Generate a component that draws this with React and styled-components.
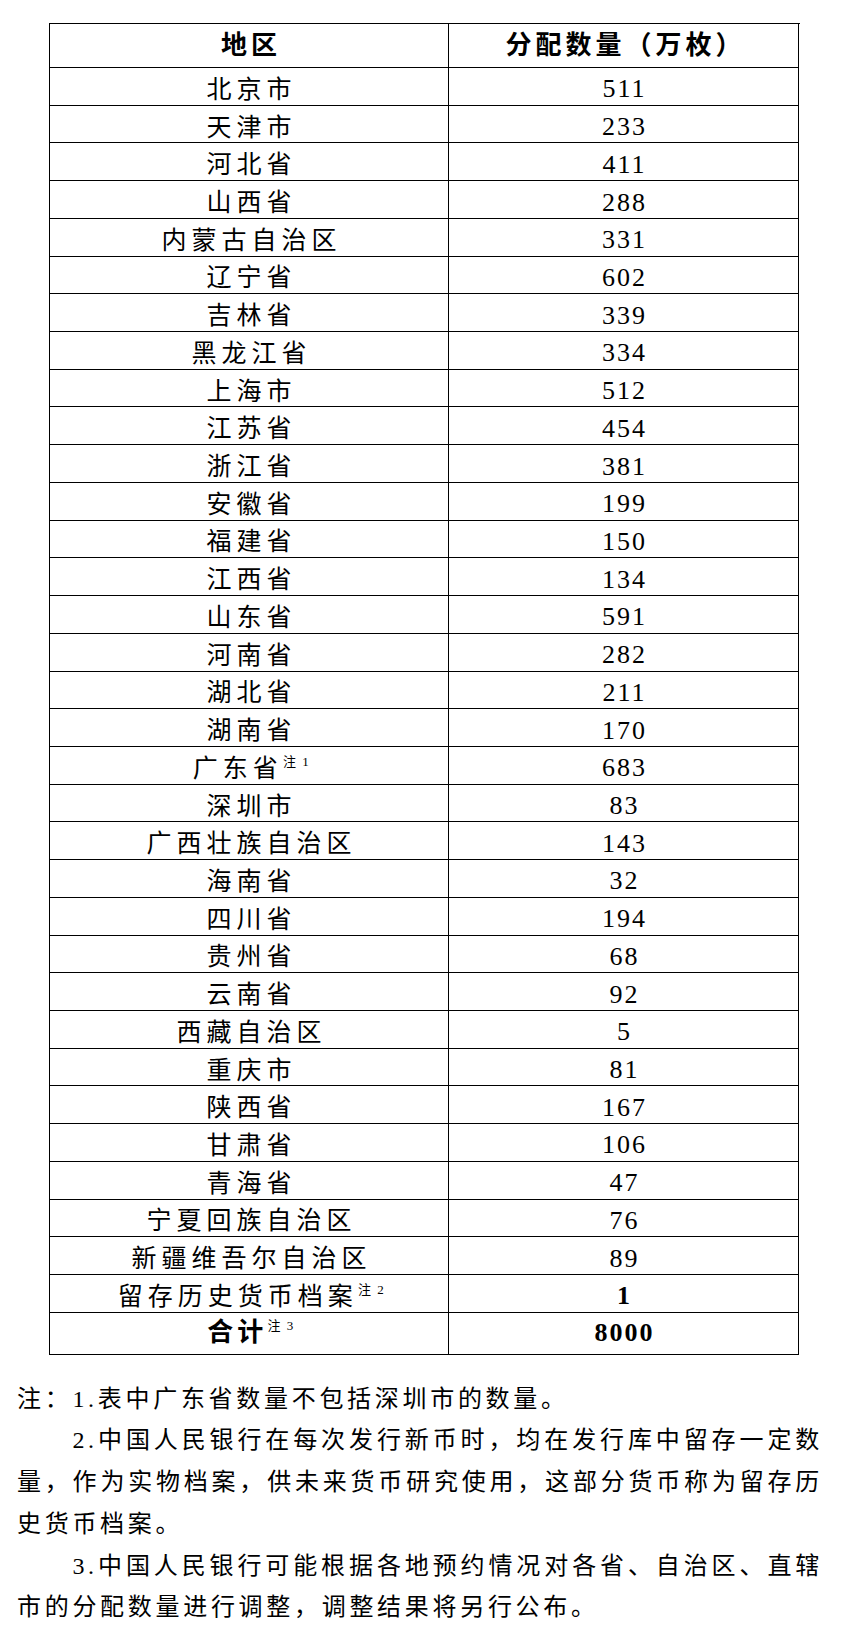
import React from 'react';
import styled, { createGlobalStyle } from 'styled-components';

const GlobalStyle = createGlobalStyle`
  html, body {
    margin: 0;
    padding: 0;
    background: #fff;
  }
  body {
    font-family: "Liberation Serif", "Noto Sans CJK SC", serif;
    color: #000;
  }
`;

const Page = styled.div`
  width: 849px;
  min-height: 1645px;
  box-sizing: border-box;
  padding-top: 23px;
`;

const Table = styled.div`
  display: grid;
  grid-template-columns: 399px 350px;
  grid-template-rows: 44px repeat(33, 37.73px) 42px;
  margin-left: 49px;
  width: 750px;
  border-top: 1px solid #000;
  border-left: 1px solid #000;
`;

const Cell = styled.div`
  box-sizing: border-box;
  border-right: 1px solid #000;
  border-bottom: 1px solid #000;
  display: flex;
  align-items: center;
  justify-content: center;
  padding-top: ${(p) => p.$shift || 0}px;
  padding-left: ${(p) => p.$pad || 0}px;
  white-space: nowrap;
  line-height: 1;
`;

const Text = styled.span`
  display: inline-block;
  line-height: 1;
`;

const Label = styled.span`
  font-family: "Liberation Serif", "Noto Sans CJK SC", serif;
  font-size: ${(p) => (p.$bold ? 26 : 25)}px;
  font-weight: ${(p) => (p.$bold ? 700 : 400)};
  letter-spacing: ${(p) => (p.$bold ? 4 : 5)}px;
`;

const Num = styled.span`
  font-family: "Liberation Serif", serif;
  font-size: 26px;
  font-weight: ${(p) => (p.$bold ? 700 : 400)};
  letter-spacing: 2px;
`;

const Sup = styled.span`
  font-family: "Liberation Serif", "Noto Sans CJK SC", serif;
  font-size: 13px;
  font-weight: 400;
  letter-spacing: 1.5px;
  line-height: 0;
  vertical-align: 11px;
`;

const Notes = styled.div`
  margin-top: 24px;
  margin-left: 17px;
  width: 806px;
  font-family: "Liberation Serif", "Noto Sans CJK SC", serif;
  font-size: 24px;
  letter-spacing: 3.7px;
  line-height: 41.7px;
  text-align: justify;
`;

const Para = styled.p`
  margin: 0;
  text-indent: ${(p) => (p.$indent ? '55.4px' : '0')};
`;

const rows = [
  ['北京市', '511'], ['天津市', '233'], ['河北省', '411'], ['山西省', '288'],
  ['内蒙古自治区', '331'], ['辽宁省', '602'], ['吉林省', '339'], ['黑龙江省', '334'],
  ['上海市', '512'], ['江苏省', '454'], ['浙江省', '381'], ['安徽省', '199'],
  ['福建省', '150'], ['江西省', '134'], ['山东省', '591'], ['河南省', '282'],
  ['湖北省', '211'], ['湖南省', '170'], ['广东省', '683', '注 1'], ['深圳市', '83'],
  ['广西壮族自治区', '143'], ['海南省', '32'], ['四川省', '194'], ['贵州省', '68'],
  ['云南省', '92'], ['西藏自治区', '5'], ['重庆市', '81'], ['陕西省', '167'],
  ['甘肃省', '106'], ['青海省', '47'], ['宁夏回族自治区', '76'], ['新疆维吾尔自治区', '89'],
  ['留存历史货币档案', '1', '注 2', 'num'],
];

export default function App() {
  return (
    <Page>
      <GlobalStyle />
      <Table>
        <Cell $pad={4}>
          <Label $bold>地区</Label>
        </Cell>
        <Cell $pad={4}>
          <Label $bold>分配数量（万枚）</Label>
        </Cell>

        {rows.map(([name, value, note, boldNum]) => (
          <React.Fragment key={name}>
            <Cell $shift={6} $pad={5}>
              <Text>
                <Label>{name}</Label>
                {note && <Sup>{note}</Sup>}
              </Text>
            </Cell>
            <Cell $shift={6} $pad={2}>
              <Num $bold={!!boldNum}>{value}</Num>
            </Cell>
          </React.Fragment>
        ))}

        <Cell $pad={4}>
          <Text>
            <Label $bold>合计</Label>
            <Sup>注 3</Sup>
          </Text>
        </Cell>
        <Cell $pad={2}>
          <Num $bold>8000</Num>
        </Cell>
      </Table>

      <Notes>
        <Para>注：1.表中广东省数量不包括深圳市的数量。</Para>
        <Para $indent>
          2.中国人民银行在每次发行新币时，均在发行库中留存一定数量，作为实物档案，供未来货币研究使用，这部分货币称为留存历史货币档案。
        </Para>
        <Para $indent>
          3.中国人民银行可能根据各地预约情况对各省、自治区、直辖市的分配数量进行调整，调整结果将另行公布。
        </Para>
      </Notes>
    </Page>
  );
}
